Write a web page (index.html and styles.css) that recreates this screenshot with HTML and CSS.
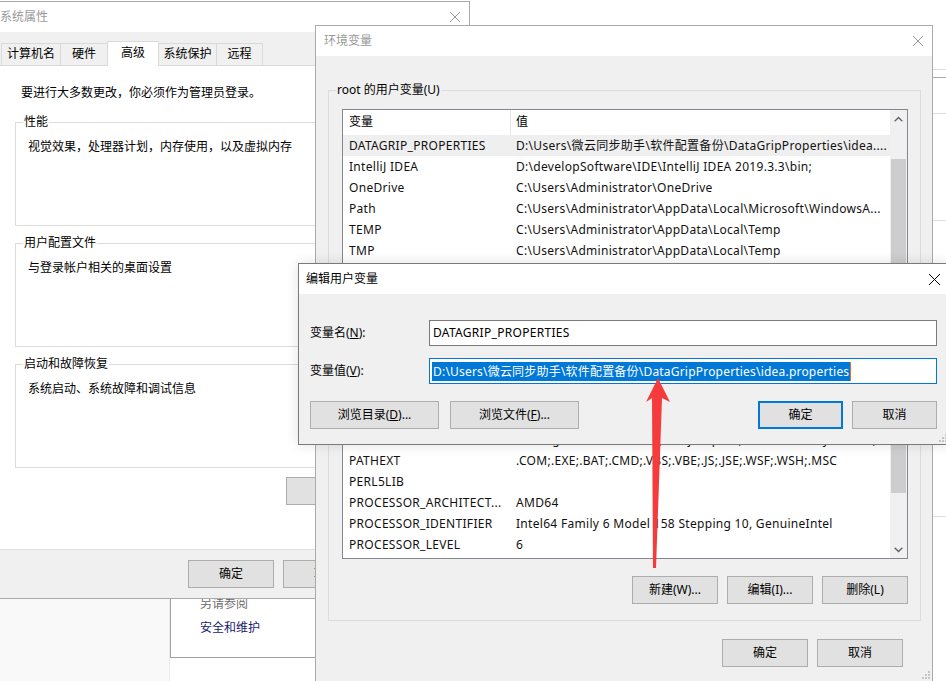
FILE: index.html
```html
<!DOCTYPE html>
<html lang="zh-CN">
<head>
	<meta charset="UTF-8">
	<meta name="viewport" content="width=device-width, initial-scale=1.0">
	<title>环境变量</title>
	<link rel="stylesheet" href="styles.css">
</head>
<body>
<div class="desktop">

	<!-- 背后的控制面板 -->
	<div class="cp-left"></div>
	<div class="cp-box">
		<div class="cp-link muted">另请参阅</div>
		<div class="cp-link navy">安全和维护</div>
	</div>
	<div class="edge-panel"></div>
	<div class="edge-line"></div>

	<!-- 系统属性 -->
	<div class="win sys">
		<div class="titlebar">
			<span class="title">系统属性</span>
			<svg class="x" width="10" height="10" viewBox="0 0 10 10"><path d="M0 0L10 10M10 0L0 10" stroke="currentColor" stroke-width="1" fill="none"/></svg>
		</div>
		<div class="sys-body">
			<div class="tabs">
				<div class="tab w1">计算机名</div>
				<div class="tab w2">硬件</div>
				<div class="tab w3 on">高级</div>
				<div class="tab w4">系统保护</div>
				<div class="tab w5 last">远程</div>
			</div>
			<div class="tab-panel">
				<p class="note">要进行大多数更改，你必须作为管理员登录。</p>
				<fieldset class="group">
					<legend>性能</legend>
					<div class="group-body">视觉效果，处理器计划，内存使用，以及虚拟内存</div>
				</fieldset>
				<fieldset class="group">
					<legend>用户配置文件</legend>
					<div class="group-body">与登录帐户相关的桌面设置</div>
				</fieldset>
				<fieldset class="group">
					<legend>启动和故障恢复</legend>
					<div class="group-body">系统启动、系统故障和调试信息</div>
				</fieldset>
				<div class="panel-btns"><button class="btn envbtn">环境变量(N)...</button></div>
			</div>
		</div>
		<div class="footer">
			<button class="btn">确定</button>
			<button class="btn">取消</button>
			<button class="btn">应用(A)</button>
		</div>
	</div>

	<!-- 环境变量 -->
	<div class="win env">
		<div class="titlebar">
			<span class="title">环境变量</span>
			<svg class="x" width="10" height="10" viewBox="0 0 10 10"><path d="M0 0L10 10M10 0L0 10" stroke="currentColor" stroke-width="1" fill="none"/></svg>
		</div>
		<div class="env-body">
			<fieldset class="group env-group">
				<legend>root 的用户变量(U)</legend>
				<div class="listview">
					<div class="lv-main">
						<div class="lv-head"><div class="c1">变量</div><div class="c2">值</div></div>
						<div class="lv-row hot"><div class="c1">DATAGRIP_PROPERTIES</div><div class="c2">D:\Users\微云同步助手\软件配置备份\DataGripProperties\idea....</div></div>
						<div class="lv-row"><div class="c1">IntelliJ IDEA</div><div class="c2">D:\developSoftware\IDE\IntelliJ IDEA 2019.3.3\bin;</div></div>
						<div class="lv-row"><div class="c1">OneDrive</div><div class="c2">C:\Users\Administrator\OneDrive</div></div>
						<div class="lv-row"><div class="c1">Path</div><div class="c2">C:\Users\Administrator\AppData\Local\Microsoft\WindowsA...</div></div>
						<div class="lv-row"><div class="c1">TEMP</div><div class="c2">C:\Users\Administrator\AppData\Local\Temp</div></div>
						<div class="lv-row"><div class="c1">TMP</div><div class="c2">C:\Users\Administrator\AppData\Local\Temp</div></div>
						<div class="lv-row"><div class="c1">ComSpec</div><div class="c2">C:\Windows\system32\cmd.exe</div></div>
						<div class="lv-row"><div class="c1">DriverData</div><div class="c2">C:\Windows\System32\Drivers\DriverData</div></div>
						<div class="lv-row"><div class="c1">JAVA_HOME</div><div class="c2">D:\developSoftware\Java\jdk1.8.0_201</div></div>
						<div class="lv-row"><div class="c1">MAVEN_HOME</div><div class="c2">D:\developSoftware\apache-maven-3.6.3</div></div>
						<div class="lv-row"><div class="c1">NUMBER_OF_PROCESSORS</div><div class="c2">12</div></div>
						<div class="lv-row"><div class="c1">OS</div><div class="c2">Windows_NT</div></div>
						<div class="lv-row"><div class="c1">OneDrive</div><div class="c2">C:\Users\Administrator\OneDrive</div></div>
						<div class="lv-row"><div class="c1">OnlineServices</div><div class="c2">Online Services</div></div>
						<div class="lv-row"><div class="c1">Path</div><div class="c2">C:\ProgramData\Oracle\Java\javapath;C:\Windows\system32;C:\Windows;C:\...</div></div>
						<div class="lv-row"><div class="c1">PATHEXT</div><div class="c2">.COM;.EXE;.BAT;.CMD;.VBS;.VBE;.JS;.JSE;.WSF;.WSH;.MSC</div></div>
						<div class="lv-row"><div class="c1">PERL5LIB</div><div class="c2"></div></div>
						<div class="lv-row"><div class="c1">PROCESSOR_ARCHITECT...</div><div class="c2">AMD64</div></div>
						<div class="lv-row"><div class="c1">PROCESSOR_IDENTIFIER</div><div class="c2">Intel64 Family 6 Model 158 Stepping 10, GenuineIntel</div></div>
						<div class="lv-row"><div class="c1">PROCESSOR_LEVEL</div><div class="c2">6</div></div>
						<div class="lv-row"><div class="c1">PROCESSOR_REVISION</div><div class="c2">9e0a</div></div>
					</div>
					<div class="scrollbar">
						<div class="sb-arrow"><svg width="9" height="6" viewBox="0 0 9 6"><path d="M0 5L4.5 0.5L9 5L7.6 5.6L4.5 2.6L1.4 5.6Z" fill="#606060"/></svg></div>
						<div class="sb-track"><div class="sb-thumb"></div></div>
						<div class="sb-arrow"><svg width="9" height="6" viewBox="0 0 9 6"><path d="M0 1L4.5 5.5L9 1L7.6 0.4L4.5 3.4L1.4 0.4Z" fill="#606060"/></svg></div>
					</div>
				</div>
				<div class="btn-row">
					<button class="btn">新建(W)...</button>
					<button class="btn">编辑(I)...</button>
					<button class="btn">删除(L)</button>
				</div>
			</fieldset>
			<div class="btn-row bottom">
				<button class="btn">确定</button>
				<button class="btn">取消</button>
			</div>
		</div>
		<svg class="grip env-grip" width="8" height="8" viewBox="0 0 8 8"><path d="M6 0h2v2h-2zM3 3h2v2h-2zM6 3h2v2h-2zM0 6h2v2h-2zM3 6h2v2h-2zM6 6h2v2h-2z" fill="#c4c4c4"/></svg>
	</div>

	<!-- 编辑用户变量 -->
	<div class="win edit">
		<div class="titlebar">
			<span class="title">编辑用户变量</span>
			<svg class="x" width="11" height="11" viewBox="0 0 11 11"><path d="M0 0L11 11M11 0L0 11" stroke="currentColor" stroke-width="1" fill="none"/></svg>
		</div>
		<div class="edit-body">
			<div class="field">
				<label>变量名(<u>N</u>):</label>
				<div class="input">DATAGRIP_PROPERTIES</div>
			</div>
			<div class="field">
				<label>变量值(<u>V</u>):</label>
				<div class="input focus"><span class="sel">D:\Users\微云同步助手\软件配置备份\DataGripProperties\idea.properties</span><span class="caret"></span></div>
			</div>
			<div class="edit-btns">
				<button class="btn browse">浏览目录(<u>D</u>)...</button>
				<button class="btn browse">浏览文件(<u>F</u>)...</button>
				<span class="spacer"></span>
				<button class="btn default">确定</button>
				<button class="btn">取消</button>
			</div>
		</div>
		<svg class="grip edit-grip" width="8" height="8" viewBox="0 0 8 8"><path d="M6 0h2v2h-2zM3 3h2v2h-2zM6 3h2v2h-2zM0 6h2v2h-2zM3 6h2v2h-2zM6 6h2v2h-2z" fill="#c4c4c4"/></svg>
	</div>

	<!-- 红色箭头 -->
	<svg class="arrow" width="946" height="681" viewBox="0 0 946 681">
		<path d="M658 378L670 402L662 398L656 568L653 568L652 398L646 402Z" fill="#f53b3b"/>
	</svg>
</div>
</body>
</html>
```

FILE: styles.css
```css
*{ box-sizing: border-box; }
body{
	margin: 0; background: #fff; color: #000;
	font: 12px/16px "Noto Sans", "Noto Sans CJK SC", sans-serif;
}
.desktop{ position: relative; width: 946px; height: 681px; overflow: hidden; background: #fff; }
button{ font: inherit; color: #000; }
u{ text-decoration: underline; text-underline-offset: 1px; }

/* background windows */
.cp-left{ position: absolute; left: 0; top: 598px; width: 170px; height: 83px; background: #f9f9f9; border-right: 1px solid #ececec; }
.cp-box{
	position: absolute; left: 170px; top: 580px; width: 200px; height: 78px;
	border: 1px solid #a0a0a0; background: #fff; padding: 15px 0 0 29px;
}
.cp-link{ line-height: 16px; margin-bottom: 8px; }
.cp-link.muted{ color: #6d6d6d; }
.cp-link.navy{ color: #1a1a6c; }
.edge-panel{ position: absolute; left: 933px; top: 69px; width: 20px; height: 152px; border-top: 1px solid #dcdcdc; border-bottom: 1px solid #dcdcdc; background: #fff; }
.edge-panel::before{ content: ""; display: block; margin-top: 7px; border-top: 1px solid #a8a8a8; }
.edge-panel::after{ content: ""; display: block; margin-top: 35px; border-top: 1px solid #dcdcdc; }
.edge-line{ position: absolute; left: 933px; top: 516px; width: 20px; border-top: 1px solid #dcdcdc; }

/* windows */
.win{ position: absolute; background: #f0f0f0; border: 1px solid #aaa; }
.titlebar{
	height: 30px; background: #fff; display: flex; align-items: center;
	justify-content: space-between; padding: 0 9px 0 8px; color: #999;
}
.title{ line-height: 16px; }
.x{ display: block; }

.btn{
	height: 28px; width: 86px; padding: 0; background: #e1e1e1;
	border: 1px solid #adadad; border-radius: 0; line-height: 24px;
}

.group{ border: 1px solid #dcdcdc; margin: 0; padding: 0; min-width: 0; }
.group legend{ padding: 0 1px; margin-left: 7px; line-height: 16px; }

/* 系统属性 */
.sys{ left: -12px; top: 1px; width: 482px; height: 598px; }
.sys .titlebar{ padding-left: 11px; }
.sys-body{ padding: 0 8px; }
.tabs{ height: 33px; display: flex; align-items: flex-end; padding-left: 4px; }
.tab{
	height: 22px; line-height: 20px; text-align: center; background: #f0f0f0;
	border: 1px solid #d9d9d9; border-right: none; border-bottom: none;
}
.tab.last{ border-right: 1px solid #d9d9d9; }
.tab.on{
	height: 25px; margin-bottom: -1px; background: #fff; position: relative;
	line-height: 22px; border-right: 1px solid #d9d9d9; margin-right: -1px;
}
.w1{ width: 59px; } .w2{ width: 47px; } .w3{ width: 52px; } .w4{ width: 58px; } .w5{ width: 47px; }
.tab-panel{
	height: 484px; background: #fff; border: 1px solid #d9d9d9; border-bottom: none;
	padding: 19px 6px 0 17px;
}
.note{ margin: 0 0 13px 6px; }
.sys .group{ margin-bottom: 9px; }
.sys .group-body{ height: 95px; padding: 9px 0 0 12px; }
.panel-btns{ display: flex; justify-content: flex-end; margin-top: 8px; }
.envbtn{ width: 168px; }
.footer{
	height: 49px; border-top: 1px solid #dfdfdf; display: flex;
	justify-content: flex-end; gap: 9px; padding: 10px 5px 0 0;
}

/* 环境变量 */
.env{ left: 315px; top: 25px; width: 618px; height: 662px; z-index: 2; }
.env-body{ padding-top: 26px; }
.env-group{ margin: 0 11px 0 12px; padding: 0 12px 16px 13px; }
.env-group legend{ margin-left: -6px; }
.listview{ height: 450px; margin-top: 11px; border: 1px solid #828790; background: #fff; display: flex; }
.lv-main{ flex: 1; overflow: hidden; }
.lv-head, .lv-row{ display: flex; white-space: nowrap; }
.lv-head{ height: 25px; line-height: 24px; }
.lv-head .c1{ border-right: 1px solid #e5e5e5; }
.lv-row{ height: 21px; line-height: 21px; color: #111; letter-spacing: 0.3px; }
.lv-row.hot{ background: #efefef; }
.c1{ width: 168px; flex: none; padding-left: 6px; overflow: hidden; }
.c2{ flex: 1; padding-left: 5px; overflow: hidden; }
.scrollbar{ width: 17px; flex: none; background: #f0f0f0; display: flex; flex-direction: column; }
.sb-arrow{ height: 17px; display: flex; align-items: center; justify-content: center; }
.sb-track{ flex: 1; padding: 32px 1px 0; }
.sb-thumb{ height: 334px; background: #cdcdcd; }
.btn-row{ display: flex; justify-content: flex-end; gap: 9px; margin-top: 17px; }
.btn-row.bottom{ margin: 18px 29px 0 0; }
.grip{ position: absolute; display: block; }
.env-grip{ right: 2px; top: 645px; }

/* 编辑用户变量 */
.edit{
	left: 298px; top: 263px; width: 652px; height: 182px; z-index: 3;
	border-color: #7a7a7a; box-shadow: 0 0 12px rgba(0,0,0,0.12);
}
.edit .titlebar{ color: #000; padding-right: 9px; padding-left: 7px; }
.edit-body{ padding: 26px 12px 0 11px; }
.field{ display: flex; align-items: center; margin-bottom: 12px; }
.field label{ width: 119px; flex: none; }
.input{
	flex: 1; height: 26px; background: #fff; border: 1px solid #7a7a7a;
	padding: 0 3px; line-height: 24px; white-space: nowrap; overflow: hidden;
	display: flex; align-items: center; letter-spacing: 0.3px;
}
.input.focus{ border-color: #0078d7; padding-left: 2px; letter-spacing: 0.2px; }
.sel{ background: #0078d7; color: #fff; line-height: 19px; padding: 0 1px; }
.caret{ width: 1px; height: 19px; background: #e07020; }
.edit-btns{ display: flex; gap: 11px; margin-top: 17px; }
.edit-btns .btn{ width: 85px; }
.edit-btns .browse{ width: 129px; }
.edit-btns .spacer{ flex: 1; }
.edit-btns .default{ border: 2px solid #0078d7; margin-right: -2px; }
.edit-grip{ right: 2px; bottom: 2px; }

.arrow{ position: absolute; left: 0; top: 0; z-index: 5; pointer-events: none; }
```
